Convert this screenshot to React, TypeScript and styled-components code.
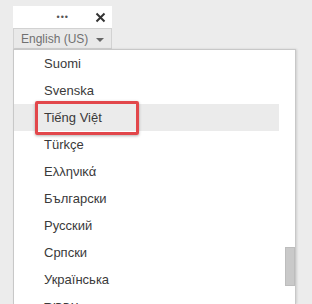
import styled, { createGlobalStyle } from "styled-components";

const Global = createGlobalStyle`
    html, body {
        margin: 0;
        padding: 0;
        background-color: #ececec;
        font-family: "Liberation Sans", Arial, sans-serif;
    }
`;

const Page = styled.div`
    width: 312px;
    height: 304px;
    overflow: hidden;
    padding: 6px 0 0 13px;
    box-sizing: border-box;
    display: flex;
    flex-direction: column;
`;

const TopBar = styled.div`
    width: 99px;
    height: 22px;
    background-color: #fff;
    display: flex;
    align-items: center;
    justify-content: flex-end;
    gap: 26px;
    padding-right: 6px;
    box-sizing: border-box;
`;

const Dots = styled.span`
    font-size: 9px;
    letter-spacing: 1px;
    color: #555;
    line-height: 1;
`;

const LangButton = styled.div`
    width: 99px;
    height: 21px;
    box-sizing: border-box;
    border: 1px solid #d2d2d2;
    background-color: #e9e9e9;
    display: flex;
    align-items: center;
    justify-content: space-between;
    padding: 0 7px 0 7px;
    font-size: 12px;
    color: #707070;
`;

const Caret = styled.span`
    width: 0;
    height: 0;
    border-left: 4px solid transparent;
    border-right: 4px solid transparent;
    border-top: 4px solid #666;
    margin-top: 2px;
`;

const Panel = styled.div`
    width: 281px;
    flex: 1;
    background-color: #fff;
    border: 1px solid #c8c8c8;
    border-bottom: none;
    box-shadow: 1px 0 2px rgba(0, 0, 0, 0.12);
    display: flex;
    overflow: hidden;
`;

const List = styled.ul`
    list-style: none;
    margin: 0;
    padding: 0;
    flex: 1;
`;

const Item = styled.li<{ $active?: boolean }>`
    position: relative;
    height: 27px;
    display: flex;
    align-items: center;
    padding-left: 30px;
    font-size: 13px;
    color: #3a3a3a;
    background-color: ${p => (p.$active ? "#ebebeb" : "transparent")};
`;

const Callout = styled.span`
    position: absolute;
    left: 21px;
    top: -3px;
    width: 104px;
    height: 34px;
    box-sizing: border-box;
    border: 3px solid #e2474b;
    border-radius: 2px;
    box-shadow: 0 1px 3px rgba(0, 0, 0, 0.3);
`;

const Track = styled.div`
    width: 16px;
    display: flex;
    justify-content: flex-end;
`;

const Thumb = styled.div`
    width: 10px;
    height: 39px;
    margin-top: 197px;
    background-color: #c9c9c9;
    border: 1px solid #bdbdbd;
    box-sizing: border-box;
`;

const languages = [
    "Suomi",
    "Svenska",
    "Tiếng Việt",
    "Türkçe",
    "Ελληνικά",
    "Български",
    "Русский",
    "Српски",
    "Українська",
    "עברית",
];

function App() {
    return (
        <>
            <Global />
            <Page>
                <TopBar>
                    <Dots>•••</Dots>
                    <svg width="11" height="11" viewBox="0 0 11 11">
                        <path d="M1.5 1.5 L9.5 9.5 M9.5 1.5 L1.5 9.5" stroke="#333" strokeWidth="2" />
                    </svg>
                </TopBar>
                <LangButton>
                    English (US)
                    <Caret />
                </LangButton>
                <Panel>
                    <List>
                        {languages.map(lang => (
                            <Item key={lang} $active={lang === "Tiếng Việt"}>
                                {lang}
                                {lang === "Tiếng Việt" && <Callout />}
                            </Item>
                        ))}
                    </List>
                    <Track>
                        <Thumb />
                    </Track>
                </Panel>
            </Page>
        </>
    );
}

export default App;
